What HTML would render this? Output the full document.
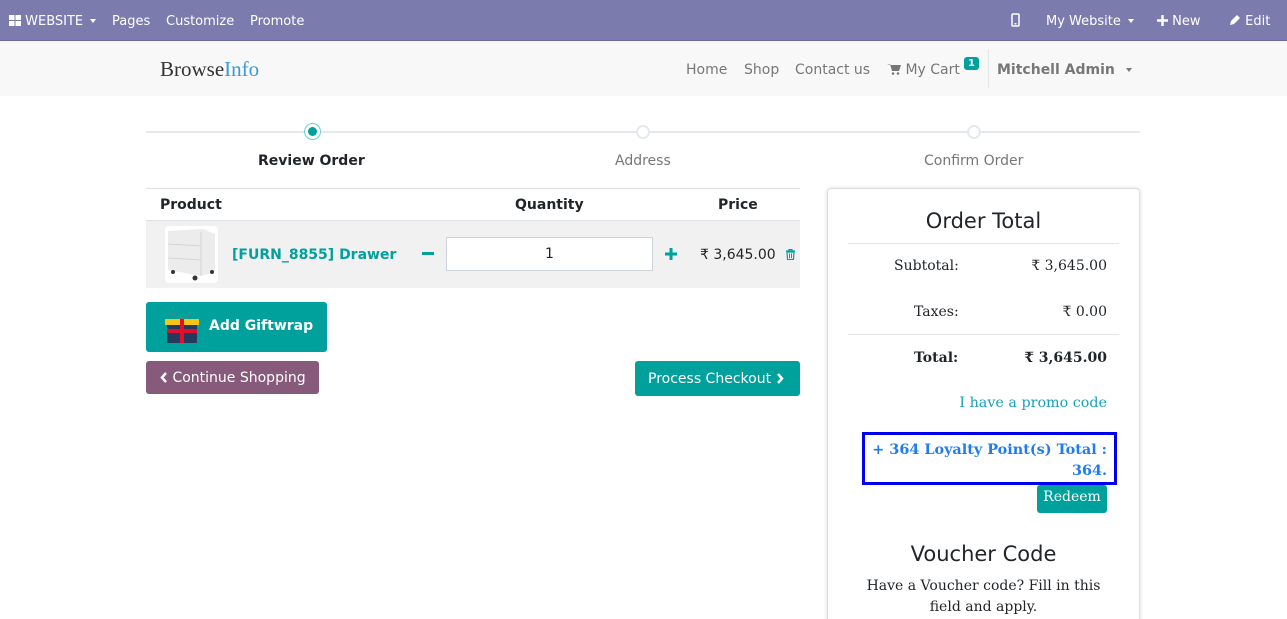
<!DOCTYPE html>
<html style="height:619px;overflow:hidden"><head><meta charset="utf-8"><style>
*{box-sizing:border-box;margin:0;padding:0}
body{width:1287px;height:619px;overflow:hidden;background:#fff;font-family:"DejaVu Sans","Liberation Sans",sans-serif;color:#212529;position:relative}
.abs{position:absolute;white-space:nowrap}
.top{position:absolute;left:0;top:0;width:1287px;height:41px;background:#7c7bad;border-bottom:1px solid #6a6a9c;color:#fff;font-size:13px}
.top span{position:absolute;top:14px}
.car{display:inline-block;width:0;height:0;border-left:3.5px solid transparent;border-right:3.5px solid transparent;border-top:4px solid currentColor;vertical-align:2px;margin-left:3px}
.nav{position:absolute;left:0;top:41px;width:1287px;height:55px;background:#f8f8f8}
.nav .l{position:absolute;top:21px;font-size:14px;color:#777}
.serif{font-family:"DejaVu Serif","Liberation Serif",serif}
.btn{position:absolute;border-radius:3px;color:#fff}
</style></head><body>
<div class="top">
<span style="left:9px"><svg width="12" height="11" style="vertical-align:-1px"><rect x="0" y="0" width="5.5" height="5" fill="#fff"/><rect x="6.5" y="0" width="5.5" height="5" fill="#fff"/><rect x="0" y="6" width="5.5" height="5" fill="#fff"/><rect x="6.5" y="6" width="5.5" height="5" fill="#fff"/></svg> WEBSITE <i class="car"></i></span>
<span style="left:112px">Pages</span>
<span style="left:166px">Customize</span>
<span style="left:250px">Promote</span>
<span style="left:1011px;top:13px"><svg width="9" height="14"><rect x="1" y="1" width="7" height="12" rx="1" fill="none" stroke="#fff" stroke-width="1.5"/><rect x="3.5" y="10" width="2" height="1.5" fill="#fff"/></svg></span>
<span style="left:1046px">My Website <i class="car"></i></span>
<span style="left:1157px"><svg width="11" height="11" style="vertical-align:-1px"><path d="M5.5 0V11M0 5.5H11" stroke="#fff" stroke-width="2.5"/></svg> New</span>
<span style="left:1229px"><svg width="12" height="12" style="vertical-align:-1px"><path d="M1 11l1-4 6-6 3 3-6 6z" fill="#fff"/></svg> Edit</span>
</div>
<div class="nav">
<div class="abs" style="left:160px;top:16px;color:#333;font-family:'Liberation Serif',serif;font-size:21px">Browse<span style="color:#3a9ad9">Info</span></div>
<span class="l" style="left:686px">Home</span>
<span class="l" style="left:744px">Shop</span>
<span class="l" style="left:795px">Contact us</span>
<span class="l" style="left:887px"><svg width="14" height="12" style="vertical-align:-1px"><path d="M0 1h3l2 7h7l2-6H4z" fill="#777"/><circle cx="6" cy="10.5" r="1.3" fill="#777"/><circle cx="11" cy="10.5" r="1.3" fill="#777"/></svg> My Cart</span>
<span class="abs" style="left:964px;top:16px;background:#00a09d;color:#fff;font-size:10px;font-weight:bold;padding:1px 4px;border-radius:3px">1</span>
<div class="abs" style="left:988px;top:8px;width:1px;height:39px;background:#e5e5e5"></div>
<span class="l" style="left:997px;font-weight:bold">Mitchell Admin <i class="car" style="margin-left:6px"></i></span>
</div>
<!-- progress -->
<div class="abs" style="left:146px;top:131px;width:994px;height:2px;background:#e6e9ec"></div>
<div class="abs" style="left:304px;top:123px;width:17px;height:17px;border-radius:50%;border:1px solid #6ecfcd;background:#fff"></div>
<div class="abs" style="left:308px;top:127px;width:9px;height:9px;border-radius:50%;background:#00a09d"></div>
<div class="abs" style="left:636px;top:125px;width:14px;height:14px;border-radius:50%;border:2px solid #e6e9ec;background:#fff"></div>
<div class="abs" style="left:967px;top:125px;width:14px;height:14px;border-radius:50%;border:2px solid #e6e9ec;background:#fff"></div>
<div class="abs" style="left:258px;top:153px;font-size:14px;font-weight:bold">Review Order</div>
<div class="abs" style="left:615px;top:153px;font-size:14px;color:#777">Address</div>
<div class="abs" style="left:924px;top:153px;font-size:14px;color:#777">Confirm Order</div>
<!-- table -->
<div class="abs" style="left:146px;top:188px;width:654px;height:1px;background:#dee2e6"></div>
<div class="abs" style="left:160px;top:197px;font-size:14px;font-weight:bold">Product</div>
<div class="abs" style="left:515px;top:197px;font-size:14px;font-weight:bold">Quantity</div>
<div class="abs" style="left:718px;top:197px;font-size:14px;font-weight:bold">Price</div>
<div class="abs" style="left:146px;top:220px;width:654px;height:68px;background:#f1f1f1;border-top:1px solid #dee2e6"></div>
<div class="abs" style="left:165px;top:226px;width:53px;height:57px;background:#fff;border-radius:4px">
<svg width="53" height="57"><path d="M3 5L38 3 50 8V46L36 50 3 44z" fill="#ececec"/><path d="M3 18L36 20M3 32L36 34M36 6V50" stroke="#d4d4d4"/><circle cx="8" cy="46" r="2" fill="#333"/><circle cx="30" cy="52" r="2.5" fill="#333"/><circle cx="47" cy="46" r="2" fill="#333"/></svg></div>
<div class="abs" style="left:232px;top:247px;font-size:14px;font-weight:bold;color:#00a09d">[FURN_8855] Drawer</div>
<div class="abs" style="left:422px;top:252px;width:12px;height:3px;background:#00a09d"></div>
<div class="abs" style="left:446px;top:237px;width:207px;height:34px;background:#fff;border:1px solid #ced4da;font-size:14px;text-align:center;line-height:33px">1</div>
<svg class="abs" style="left:665px;top:248px" width="12" height="12"><path d="M6 0V12M0 6H12" stroke="#00a09d" stroke-width="3"/></svg>
<div class="abs" style="left:700px;top:247px;font-size:14px">₹ 3,645.00</div>
<svg class="abs" style="left:786px;top:249px" width="9" height="11"><path d="M0 2H9M3 2V0.5H6V2M1 3H8L7.5 10.5H1.5Z" fill="none" stroke="#00a09d" stroke-width="1.2"/><path d="M3.5 4.5V9M5.5 4.5V9" stroke="#00a09d"/></svg>
<!-- giftwrap -->
<div class="btn" style="left:146px;top:302px;width:181px;height:50px;background:#00a09d"></div>
<svg class="abs" style="left:164px;top:309px" width="36" height="36"><path d="M5 4l13 6 13-6" stroke="#e53" stroke-dasharray="1 2" fill="none"/><rect x="1" y="10" width="34" height="6" fill="#f5c518"/><rect x="3" y="16" width="30" height="18" fill="#243a5e"/><rect x="16" y="10" width="4" height="24" fill="#e0102a"/><rect x="3" y="20" width="30" height="4" fill="#e0102a"/></svg>
<div class="abs" style="left:209px;top:318px;font-size:14px;font-weight:bold;color:#fff">Add Giftwrap</div>
<div class="btn" style="left:146px;top:361px;width:173px;height:33px;background:#875a7b;font-size:14px;line-height:34px;padding-left:14px"><svg width="8" height="11" style="vertical-align:-1px"><path d="M6 1L2 5.5 6 10" stroke="#fff" stroke-width="2.5" fill="none"/></svg> Continue Shopping</div>
<div class="btn" style="left:635px;top:361px;width:165px;height:35px;background:#00a09d;font-size:14px;line-height:36px;padding-left:13px">Process Checkout <svg width="8" height="11" style="vertical-align:-1px"><path d="M2 1L6 5.5 2 10" stroke="#fff" stroke-width="2.5" fill="none"/></svg></div>
<!-- order total -->
<div class="abs" style="left:827px;top:188px;width:313px;height:460px;border:1px solid #ddd;border-radius:4px;box-shadow:0 0 4px rgba(0,0,0,.15)"></div>
<div class="abs" style="left:827px;width:313px;top:209px;text-align:center;font-size:21px">Order Total</div>
<div class="abs" style="left:848px;top:243px;width:271px;height:1px;background:#e5e5e5"></div>
<div class="abs serif" style="left:894px;top:258px;font-size:14px">Subtotal:</div>
<div class="abs serif" style="right:180px;top:258px;font-size:14px">₹ 3,645.00</div>
<div class="abs serif" style="left:914px;top:304px;font-size:14px">Taxes:</div>
<div class="abs serif" style="right:180px;top:304px;font-size:14px">₹ 0.00</div>
<div class="abs" style="left:848px;top:334px;width:271px;height:1px;background:#e5e5e5"></div>
<div class="abs serif" style="left:914px;top:350px;font-size:14px;font-weight:bold">Total:</div>
<div class="abs serif" style="right:180px;top:350px;font-size:14px;font-weight:bold">₹ 3,645.00</div>
<div class="abs serif" style="right:180px;top:395px;font-size:14.3px;color:#17a2b8">I have a promo code</div>
<div class="abs serif" style="left:862px;top:432px;width:255px;height:53px;border:3px solid #0000f0;text-align:right;padding:4px 7px 0 0;font-size:14.4px;font-weight:bold;color:#1e7cf0;line-height:21px">+ 364 Loyalty Point(s) Total :<br>364.</div>
<div class="btn serif" style="left:1037px;top:485px;width:70px;height:28px;background:#00a09d;font-size:14px;line-height:24px;text-align:center">Redeem</div>
<div class="abs" style="left:827px;width:313px;top:542px;text-align:center;font-size:21px">Voucher Code</div>
<div class="abs serif" style="left:827px;width:313px;top:576px;text-align:center;font-size:14px;line-height:21px">Have a Voucher code? Fill in this<br>field and apply.</div>
</body></html>
